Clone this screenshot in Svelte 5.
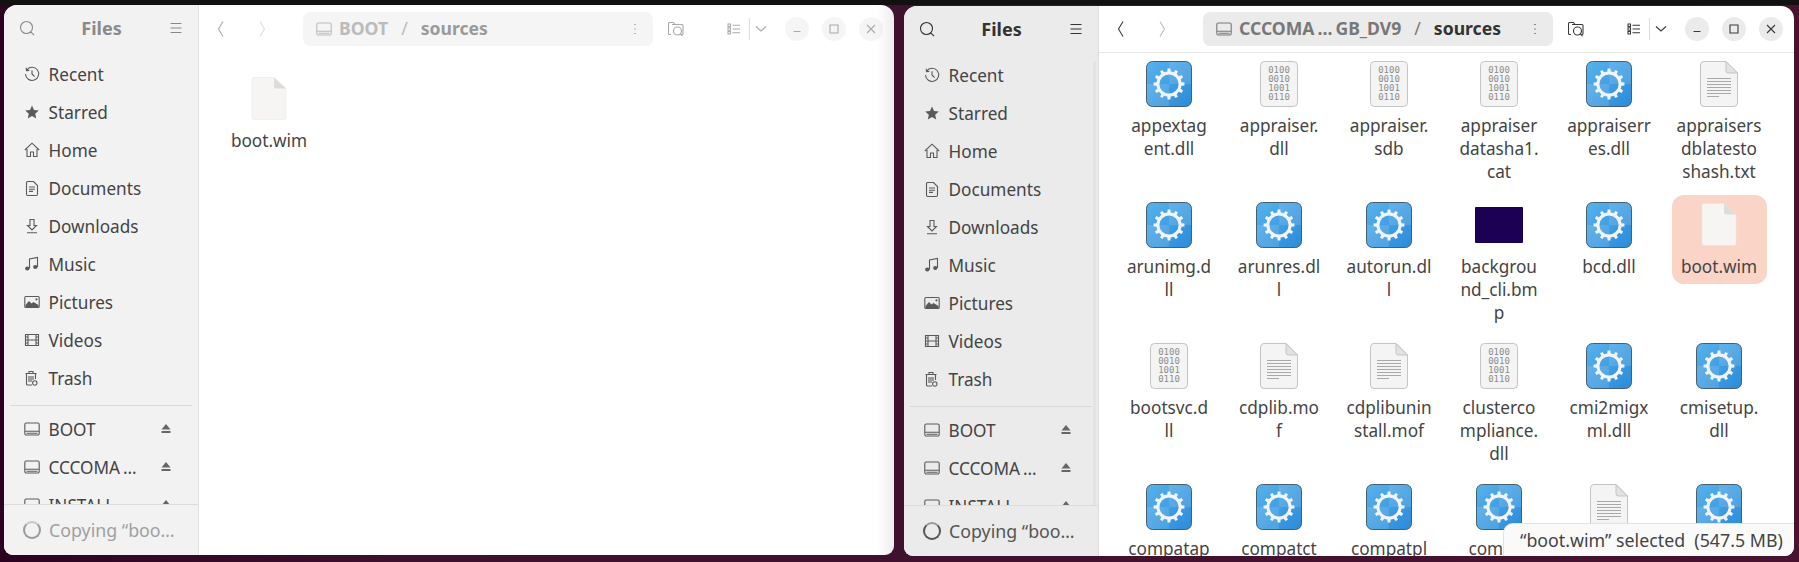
<script>
    const places = [
        { name: 'Recent', icon: 'recent' },
        { name: 'Starred', icon: 'star' },
        { name: 'Home', icon: 'home' },
        { name: 'Documents', icon: 'doc' },
        { name: 'Downloads', icon: 'download' },
        { name: 'Music', icon: 'music' },
        { name: 'Pictures', icon: 'picture' },
        { name: 'Videos', icon: 'video' },
        { name: 'Trash', icon: 'trash' }
    ];
    const drives = ['BOOT', 'CCCOMA\u2009…', 'INSTALL'];

    const paths = {
        search: 'M7.500 1.500a6 6 0 1 0 0 12 6 6 0 0 0 0-12zM11.700 11.800L15 15.200',
        menu: 'M2.500 3.500h11M2.500 8h11M2.500 12.500h11',
        back: 'M10 .5L5.500 8l4.500 7.500',
        forward: 'M6 .5L10.500 8 6 15.500',
        recent: 'M2.600 4.200A6.600 6.600 0 1 1 1.500 8M2.200 1.800l.3 2.800 2.800-.2M8 4.200V8l2.600 2.600',
        home: 'M.8 8L8 1.200 15.200 8M3 7v7.500h3.500V10h3v4.500H13V7',
        doc: 'M2.500 2.500a1 1 0 0 1 1-1h6l4 4v8.500a1.500 1.500 0 0 1-1.500 1.500H4a1.500 1.500 0 0 1-1.500-1.500zM5 7h6M5 9.200h6M5 11.400h4',
        download: 'M6 1.500h4v6h2.500L8 12 3.500 7.500H6zM3 14.800h10',
        music: 'M5.500 12.500V3l8-1.500V11',
        picture: 'M.8 3.500a1 1 0 0 1 1-1h12.400a1 1 0 0 1 1 1v9a1 1 0 0 1-1 1H1.800a1 1 0 0 1-1-1z',
        video: 'M1.500 2.500h13v11h-13zM4 2.500v11M12 2.500v11M4 8h8M1.500 5h2.500M1.500 8h2.500M1.500 11h2.500M12 5h2.500M12 8h2.500M12 11h2.500',
        trash: 'M1.500 3.500h11M5 3.500V1.500h4v2M2.500 3.500v10.500a1 1 0 0 0 1 1H8M11.500 3.500V9M5 6v6M7 6v6M9 6v4M13 13a2.200 2.200 0 1 1-4.400 0 2.200 2.200 0 0 1 4.400 0z',
        drive: 'M.8 3.500A1.500 1.500 0 0 1 2.300 2h11.400a1.500 1.500 0 0 1 1.500 1.500v9a1.500 1.500 0 0 1-1.500 1.500H2.300a1.500 1.500 0 0 1-1.500-1.500zM.8 10.300h14.400M2.500 12.200h11',
        kebab: 'M8 3v1M8 7.500v1M8 12v1',
        folder: 'M3 13.500H1.500a1 1 0 0 1-1-1v-10a1 1 0 0 1 1-1h4l1.500 2h7a1 1 0 0 1 1 1v8a1 1 0 0 1-1 1h-.5M4 3.500h8M9.500 6a4 4 0 1 0-.01 8.010A4 4 0 0 0 9.500 6zM12.300 12.800l2.200 2.400',
        list: 'M2 3h2.500v2.500H2zM2 6.800h2.500v2.500H2zM2 10.500h2.500V13H2zM6.500 4.200H14M6.500 8H14M6.500 11.800H14',
        down: 'M3 5.500l5 4.500 5-4.500',
        min: 'M4.500 10.500h7',
        max: 'M4 4h8v8H4z',
        close: 'M4 4l8 8M12 4l-8 8'
    };
    const solids = {
        star: 'M8 1.500l2 4.500 4.800.5-3.600 3.200 1 4.800L8 12.100l-4.200 2.400 1-4.800L1.200 6.500l4.800-.5z',
        music: 'M5.500 12.500a2.200 1.900 0 1 1-4.400 0 2.200 1.900 0 0 1 4.400 0zM13.500 11a2.200 1.900 0 1 1-4.400 0 2.200 1.900 0 0 1 4.400 0z',
        picture: 'M1.500 11l3.500-4 2.500 2.500 2-1.500 5 3v2H1.500zM12.500 4.200a1.100 1.100 0 1 1-.01 2.200 1.100 1.100 0 0 1 .01-2.200z',
        eject: 'M8 3l4.500 5.500h-9zM3.500 10h9v2h-9z'
    };

    // gear outline with evenodd hole, computed once
    function gearPath(cx, cy, teeth, outer, root, hole) {
        let d = '';
        const step = (Math.PI * 2) / teeth;
        for (let i = 0; i < teeth; i++) {
            const a = i * step;
            const pts = [
                [root, a - step * 0.5],
                [root, a - step * 0.26],
                [outer, a - step * 0.17],
                [outer, a + step * 0.17],
                [root, a + step * 0.26]
            ];
            for (const [r, t] of pts) {
                d += `${d ? 'L' : 'M'}${(cx + r * Math.cos(t)).toFixed(2)} ${(cy + r * Math.sin(t)).toFixed(2)}`;
            }
        }
        d += `Z M${cx - hole} ${cy}a${hole} ${hole} 0 1 0 ${hole * 2} 0a${hole} ${hole} 0 1 0 ${-hole * 2} 0Z`;
        return d;
    }
    const gear = gearPath(24, 24, 12, 15.5, 12.6, 9.6);

    const files = [
        { type: 'gear', lines: ['appextag', 'ent.dll'] },
        { type: 'bin', lines: ['appraiser.', 'dll'] },
        { type: 'bin', lines: ['appraiser.', 'sdb'] },
        { type: 'bin', lines: ['appraiser', 'datasha1.', 'cat'] },
        { type: 'gear', lines: ['appraiserr', 'es.dll'] },
        { type: 'text', lines: ['appraisers', 'dblatesto', 'shash.txt'] },
        { type: 'gear', lines: ['arunimg.d', 'll'] },
        { type: 'gear', lines: ['arunres.dl', 'l'] },
        { type: 'gear', lines: ['autorun.dl', 'l'] },
        { type: 'bmp', lines: ['backgrou', 'nd_cli.bm', 'p'] },
        { type: 'gear', lines: ['bcd.dll'] },
        { type: 'blank', lines: ['boot.wim'], selected: true },
        { type: 'bin', lines: ['bootsvc.d', 'll'] },
        { type: 'text', lines: ['cdplib.mo', 'f'] },
        { type: 'text', lines: ['cdplibunin', 'stall.mof'] },
        { type: 'bin', lines: ['clusterco', 'mpliance.', 'dll'] },
        { type: 'gear', lines: ['cmi2migx', 'ml.dll'] },
        { type: 'gear', lines: ['cmisetup.', 'dll'] },
        { type: 'gear', lines: ['compatap'] },
        { type: 'gear', lines: ['compatct'] },
        { type: 'gear', lines: ['compatpl'] },
        { type: 'gear', lines: ['compat'] },
        { type: 'text', lines: [''] },
        { type: 'gear', lines: [''] }
    ];
</script>

{#snippet icon(name)}
    <svg class="sym" viewBox="0 0 16 16" width="16" height="16">
        {#if paths[name]}<path d={paths[name]} />{/if}
        {#if solids[name]}<path class="solid" d={solids[name]} />{/if}
    </svg>
{/snippet}

{#snippet fileIcon(type)}
    <svg viewBox="0 0 48 48" width="48" height="48">
        {#if type === 'gear'}
            <rect x="1.500" y="1.500" width="45" height="45" rx="6" fill="url(#blue)" stroke="#46606f" stroke-width="1" />
            <path d="M24 2h16a6 6 0 0 1 6 6v16H24zM2 24h22v22H8a6 6 0 0 1-6-6z" fill="#fff" opacity="0.12" />
            <path d={gear} fill="#f1f4f6" fill-rule="evenodd" />
        {:else if type === 'bin'}
            <rect x="5.500" y="1.500" width="37" height="45" rx="4" fill="#f4f4f4" stroke="#c4c4c4" />
            <g class="digits">
                <text x="24" y="13">0100</text>
                <text x="24" y="22">0010</text>
                <text x="24" y="31">1001</text>
                <text x="24" y="40">0110</text>
            </g>
        {:else if type === 'text'}
            <path d="M9 1.500h22l11.500 11.500v30a3.500 3.500 0 0 1-3.500 3.500H9a3.500 3.500 0 0 1-3.500-3.500V5A3.500 3.500 0 0 1 9 1.500z" fill="#f4f4f4" stroke="#c4c4c4" />
            <path d="M31 1.500v9a2.500 2.500 0 0 0 2.500 2.500h9z" fill="#e2e2e2" stroke="#c4c4c4" />
            <path d="M12 18.500h24M12 21.500h24M12 24.500h24M12 27.500h24M12 30.500h24M12 33.500h24M12 36.500h12" stroke="#a8a8a8" stroke-width="1" />
        {:else if type === 'bmp'}
            <rect x="0" y="6" width="48" height="36" rx="1" fill="#1b0053" />
        {:else}
            <path d="M10 2.500h19l12 11v29a2 2 0 0 1-2 2H9a2 2 0 0 1-2-2v-38a2 2 0 0 1 2-2z" fill="#f6f5f4" stroke="#e6e4e2" stroke-width="0.500" />
            <path d="M29 2.500l12 11H31a2 2 0 0 1-2-2z" fill="#dedcd9" />
        {/if}
    </svg>
{/snippet}

{#snippet item(file)}
    <div class="item" class:selected={file.selected}>
        <div class="thumb">{@render fileIcon(file.type)}</div>
        <div class="label">
            {#each file.lines as line}<div>{line}</div>{/each}
        </div>
    </div>
{/snippet}

{#snippet win(active, crumb)}
    <section class="window" class:active>
        <aside class="sidebar">
            <div class="side-head">
                <span class="tool">{@render icon('search')}</span>
                <span class="title">Files</span>
                <span class="tool">{@render icon('menu')}</span>
            </div>
            <nav class="places">
                {#each places as place}
                    <div class="row">{@render icon(place.icon)}<span>{place.name}</span></div>
                {/each}
                <hr />
                {#each drives as drive}
                    <div class="row">
                        {@render icon('drive')}
                        <span class="grow">{drive}</span>
                        <span class="eject">{@render icon('eject')}</span>
                    </div>
                {/each}
            </nav>
            <div class="progress">
                <span class="spinner"></span>
                <span>Copying “boo…</span>
            </div>
        </aside>
        <main class="main">
            <header class="head">
                <span class="tool nav">{@render icon('back')}</span>
                <span class="tool nav off">{@render icon('forward')}</span>
                <div class="pathbar">
                    {@render icon('drive')}
                    <span class="crumb">{crumb}</span>
                    <span class="slash">/</span>
                    <span class="current">sources</span>
                    <span class="kebab">{@render icon('kebab')}</span>
                </div>
                <span class="tool find">{@render icon('folder')}</span>
                <span class="tool view">{@render icon('list')}</span>
                <span class="tool caret">{@render icon('down')}</span>
                <span class="btn first">{@render icon('min')}</span>
                <span class="btn">{@render icon('max')}</span>
                <span class="btn">{@render icon('close')}</span>
            </header>
            <div class="content">
                {#if active}
                    <div class="grid">
                        {#each files as file}{@render item(file)}{/each}
                    </div>
                    <div class="status">“boot.wim” selected&nbsp; (547.5 MB)</div>
                {:else}
                    <div class="grid">
                        {@render item({ type: 'blank', lines: ['boot.wim'] })}
                    </div>
                {/if}
            </div>
        </main>
    </section>
{/snippet}

<svg class="defs" width="0" height="0">
    <defs>
        <linearGradient id="blue" x1="0" y1="0" x2="1" y2="1">
            <stop offset="0" stop-color="#58b2ec" />
            <stop offset="1" stop-color="#2a8bd9" />
        </linearGradient>
    </defs>
</svg>

<div class="desktop">
    <div class="topbar"></div>
    <div class="windows">
        {@render win(false, 'BOOT')}
        {@render win(true, 'CCCOMA\u2009…\u2009GB_DV9')}
    </div>
</div>

<style>
    :global(body) {
        margin: 0;
        background: #3a0f2d;
    }
    .defs {
        position: absolute;
    }
    .desktop {
        width: 1799px;
        height: 562px;
        overflow: hidden;
        background: linear-gradient(90deg, #2b0320 0, #3d102e 400px, #47132f 1799px);
        font-family: "Noto Sans", sans-serif;
        font-size: 17.2px;
        color: #444;
    }
    .topbar {
        height: 5px;
        background: #111;
    }
    .windows {
        display: flex;
        gap: 10px;
        padding-left: 4px;
    }
    .window {
        width: 890px;
        height: 550px;
        display: flex;
        position: relative;
        border-radius: 13px 13px 9px 9px;
        overflow: hidden;
        background: #fff;
    }
    .window.active {
        margin-top: 1px;
    }
    /* shade the right window throws on the left one */
    .window:not(.active)::after {
        content: "";
        position: absolute;
        top: 0;
        right: 0;
        bottom: 0;
        width: 18px;
        background: linear-gradient(90deg, rgba(0, 0, 0, 0), rgba(0, 0, 0, 0.07));
    }

    .sym {
        flex: none;
        display: block;
        fill: none;
        stroke: currentColor;
        stroke-width: 1.100;
    }
    .sym .solid {
        fill: currentColor;
        stroke: none;
    }

    .sidebar {
        width: 194px;
        flex: none;
        display: flex;
        flex-direction: column;
        background: #f2f2f2;
        border-right: 1px solid #e2e2e2;
    }
    .active .sidebar {
        background: #ebebeb;
        border-right-color: #dcdcdc;
    }
    .side-head {
        height: 46px;
        flex: none;
        display: flex;
        align-items: center;
        padding: 0 6px 0 7px;
        color: #8a8a8a;
    }
    .active .side-head {
        color: #333;
    }
    .title {
        flex: 1;
        text-align: center;
        font-weight: 700;
        font-size: 18px;
    }
    .tool {
        width: 32px;
        display: flex;
        justify-content: center;
        flex: none;
    }
    .places {
        flex: 1;
        min-height: 0;
        overflow: hidden;
        padding-top: 4px;
        position: relative;
    }
    .active .places::after {
        content: "";
        position: absolute;
        top: 9px;
        bottom: 0;
        right: 2px;
        width: 3px;
        background: #e4e4e4;
    }
    .row {
        height: 38px;
        display: flex;
        align-items: center;
        gap: 8.500px;
        padding-left: 20px;
    }
    .row > .sym {
        color: #5a5a5a;
    }
    .grow {
        width: 99px;
        white-space: nowrap;
    }
    .eject {
        color: #666;
        margin-left: 2px;
    }
    hr {
        margin: 8px 6px 4px;
        border: 0;
        border-top: 1px solid #d9d9d9;
    }
    .progress {
        height: 50px;
        flex: none;
        display: flex;
        align-items: center;
        gap: 8px;
        padding-left: 19px;
        border-top: 1px solid #dcdcdc;
        color: #a0a0a0;
        font-size: 17.8px;
        white-space: nowrap;
    }
    .active .progress {
        color: #555;
    }
    .spinner {
        width: 14px;
        height: 14px;
        flex: none;
        border: 2px solid #9a9a9a;
        border-radius: 50%;
        border-top-color: #c8c8c8;
    }
    .active .spinner {
        border-color: #555;
        border-top-color: #999;
    }

    .main {
        flex: 1;
        min-width: 0;
        display: flex;
        flex-direction: column;
    }
    .head {
        height: 47px;
        flex: none;
        display: flex;
        align-items: center;
        padding-left: 6px;
        box-sizing: border-box;
        color: #aaa;
    }
    .active .head {
        color: #3a3a3a;
        border-bottom: 1px solid #e6e6e6;
    }
    .nav + .nav {
        margin-left: 9px;
    }
    .off {
        color: #ddd;
    }
    .active .off {
        color: #bbb;
    }
    .pathbar {
        width: 350px;
        height: 34px;
        flex: none;
        box-sizing: border-box;
        margin-left: 25px;
        padding: 0 10px 0 13px;
        display: flex;
        align-items: center;
        border-radius: 7px;
        background: #f5f5f5;
        font-weight: 700;
        font-size: 17.6px;
        color: #bbb;
    }
    .active .pathbar {
        background: #ebebeb;
        color: #787878;
    }
    .crumb {
        margin: -2px 0 0 7px;
        white-space: nowrap;
    }
    .slash {
        margin: -2px 13px 0;
        font-weight: 400;
    }
    .current {
        margin-top: -2px;
        color: #9a9a9a;
    }
    .active .current {
        color: #333;
    }
    .kebab {
        margin-left: auto;
        color: #888;
    }
    .active .kebab {
        color: #333;
    }
    .find {
        margin-left: 7px;
    }
    .view {
        margin-left: 26px;
        border-right: 1px solid #ddd;
        box-sizing: border-box;
        height: 22px;
        align-items: center;
    }
    .caret {
        width: 22px;
    }
    .btn {
        width: 24px;
        height: 24px;
        flex: none;
        margin-left: 13px;
        border-radius: 50%;
        background: #f5f5f5;
        display: flex;
        align-items: center;
        justify-content: center;
    }
    .active .btn {
        background: #ebebeb;
    }
    .content {
        flex: 1;
        min-height: 0;
        position: relative;
        overflow: hidden;
        padding-top: 17px;
    }
    .active .content {
        padding-top: 1px;
    }
    .grid {
        display: grid;
        grid-template-columns: repeat(6, 110px);
        grid-auto-rows: 141px;
        padding-left: 15px;
    }
    .item {
        width: 95px;
        justify-self: center;
        align-self: start;
        box-sizing: border-box;
        padding: 6px 0;
        border-radius: 12px;
        text-align: center;
    }
    .item.selected {
        background: #fad4c7;
    }
    .thumb {
        height: 48px;
        display: flex;
        justify-content: center;
    }
    .thumb svg {
        display: block;
    }
    .label {
        margin-top: 6px;
        line-height: 23px;
        white-space: nowrap;
    }
    .digits {
        font-family: "DejaVu Sans Mono", monospace;
        font-size: 9px;
        text-anchor: middle;
        fill: #8c8c8c;
    }
    .status {
        position: absolute;
        right: 0;
        bottom: 0;
        height: 33px;
        width: 291px;
        box-sizing: border-box;
        padding-left: 16px;
        display: flex;
        align-items: center;
        white-space: nowrap;
        font-size: 17.8px;
        background: #fafafa;
        border-top: 1px solid #e2e2e2;
        border-left: 1px solid #e2e2e2;
        border-top-left-radius: 10px;
    }
</style>
